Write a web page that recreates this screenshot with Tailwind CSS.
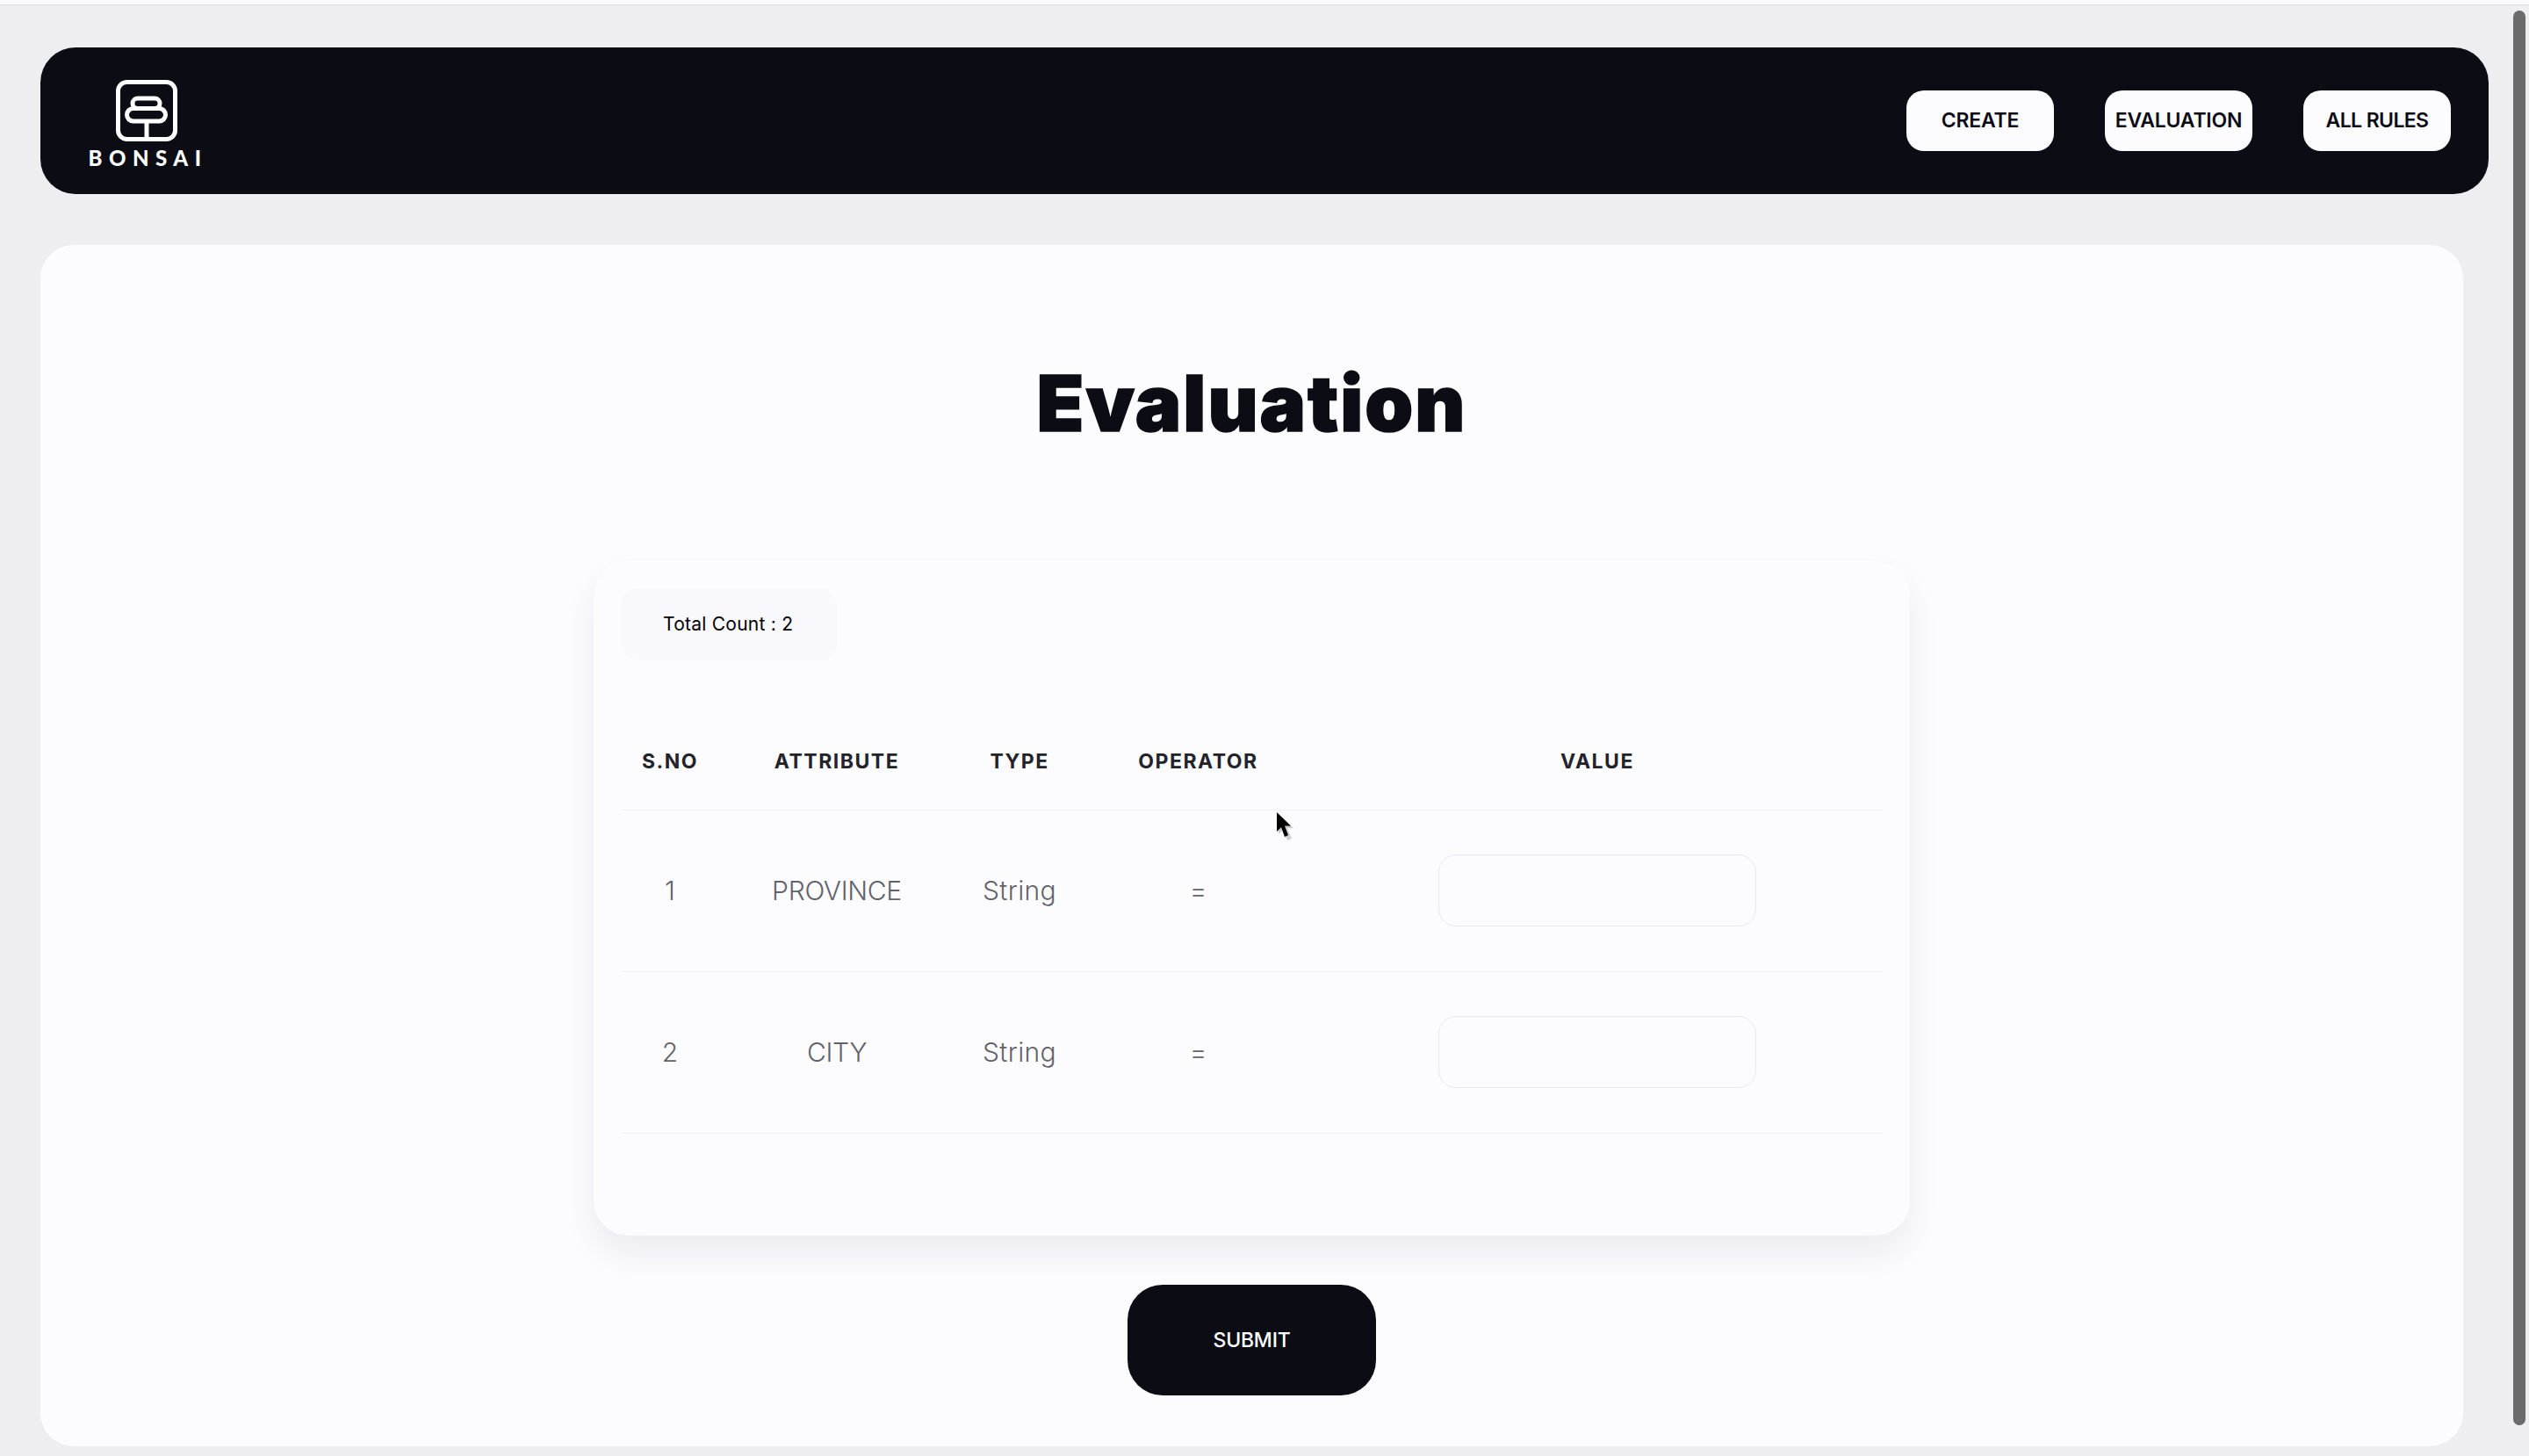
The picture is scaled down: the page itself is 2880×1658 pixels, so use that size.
<!DOCTYPE html>
<html lang="en">
<head>
  <meta charset="UTF-8" />
  <title>Bonsai - Evaluation</title>
  <script src="https://cdn.jsdelivr.net/npm/@tailwindcss/browser@4"></script>
</head>
<body class="relative h-[1658px] overflow-hidden bg-[#eeeef1] font-['Inter',sans-serif]">
  <div class="h-[6px] border-b border-[#dedee2] bg-[#fbfbfe]"></div>

  <div class="pl-[46px] pt-[48px]">
    <header class="flex h-[167px] w-[2788px] items-center justify-between rounded-[40px] bg-[#0c0c15] pl-[57px] pr-[43px]">
      <div class="mt-[5px] flex w-[127px] flex-col items-center text-white">
        <svg width="70" height="70" viewBox="0 0 70 70" fill="none" stroke="#fff" stroke-width="5">
          <rect x="2.500" y="2.500" width="65" height="65" rx="10" />
          <rect x="19" y="21" width="31" height="11.500" rx="5.750" />
          <rect x="12.500" y="32.500" width="44" height="14.500" rx="7.250" />
          <path d="M35 47V67" />
        </svg>
        <span class="mt-[9px] ml-[4px] whitespace-nowrap font-['Lato',sans-serif] text-[24px] font-black leading-[20px] tracking-[7.5px]">BONSAI</span>
      </div>
      <nav class="flex gap-[58px]">
        <a class="flex h-[69px] w-[168px] items-center justify-center rounded-[20px] bg-[#fcfcff] text-[23px] font-semibold tracking-[-0.2px] text-[#0c0c15]">CREATE</a>
        <a class="flex h-[69px] w-[168px] items-center justify-center rounded-[20px] bg-[#fcfcff] text-[23px] font-semibold tracking-[-0.2px] text-[#0c0c15]">EVALUATION</a>
        <a class="flex h-[69px] w-[168px] items-center justify-center rounded-[20px] bg-[#fcfcff] text-[23px] font-semibold tracking-[-0.6px] text-[#0c0c15]">ALL RULES</a>
      </nav>
    </header>

    <main class="mt-[58px] flex h-[1368px] w-[2759px] flex-col items-center rounded-[38px] bg-[#fcfcff]">
      <h1 class="mt-[130px] h-[230px] text-[88px] font-black leading-[100px] tracking-[2px] text-[#0c0c15] [-webkit-text-stroke:1.5px_#0c0c15]">Evaluation</h1>

      <section class="h-[768px] w-[1499px] rounded-[40px] bg-[#fcfcff] px-[31px] pt-[31px] shadow-[0_20px_40px_rgba(20,20,40,0.07)]">
        <div class="flex h-[82px] w-[246px] items-center rounded-[20px] bg-[#f8f8fd] pl-[48px] text-[21px] tracking-[0.25px] text-black">Total Count : 2</div>

        <table class="mt-[60px] w-[1437px] table-fixed border-collapse text-center">
          <colgroup>
            <col class="w-[112px]" />
            <col class="w-[268px]" />
            <col class="w-[148px]" />
            <col class="w-[259px]" />
            <col class="w-[650px]" />
          </colgroup>
          <thead>
            <tr class="h-[110px] border-b border-[#eeeef2] text-[23px] font-extrabold tracking-[1.5px] text-[#23232b]">
              <th>S.NO</th>
              <th>ATTRIBUTE</th>
              <th>TYPE</th>
              <th>OPERATOR</th>
              <th>VALUE</th>
            </tr>
          </thead>
          <tbody class="text-[30px] font-light text-[#62626a]">
            <tr class="h-[184px] border-b border-[#eeeef2]">
              <td>1</td>
              <td class="tracking-[-0.3px]">PROVINCE</td>
              <td class="tracking-[0.4px]">String</td>
              <td>=</td>
              <td><input class="mx-auto block h-[82px] w-[362px] rounded-[20px] border border-[#e8e8f4] bg-[#fcfcff]" /></td>
            </tr>
            <tr class="h-[184px] border-b border-[#eeeef2]">
              <td>2</td>
              <td class="tracking-[-0.3px]">CITY</td>
              <td class="tracking-[0.4px]">String</td>
              <td>=</td>
              <td><input class="mx-auto block h-[82px] w-[362px] rounded-[20px] border border-[#e8e8f4] bg-[#fcfcff]" /></td>
            </tr>
          </tbody>
        </table>
      </section>

      <button class="mt-[56px] h-[126px] w-[283px] rounded-[40px] bg-[#0c0c15] text-[23px] font-medium tracking-[-0.2px] text-white">SUBMIT</button>
    </main>
  </div>

  <!-- scrollbar thumb -->
  <div class="absolute left-[2862px] top-[12px] h-[1611px] w-[14px] rounded-full bg-[#6b6b6b]"></div>

  <!-- mouse cursor from the recording -->
  <svg class="absolute left-[1450px] top-[922px]" width="28" height="38" viewBox="0 0 28 38">
    <path d="M6 5L6 28L11 23L16 35L21 33L16 21L23 21Z" fill="#000" fill-opacity="0.18" />
    <path d="M4 3L4 25L9 20L13 31L17 29L13 18.500L20 18.500Z" fill="#000" />
  </svg>
</body>
</html>
